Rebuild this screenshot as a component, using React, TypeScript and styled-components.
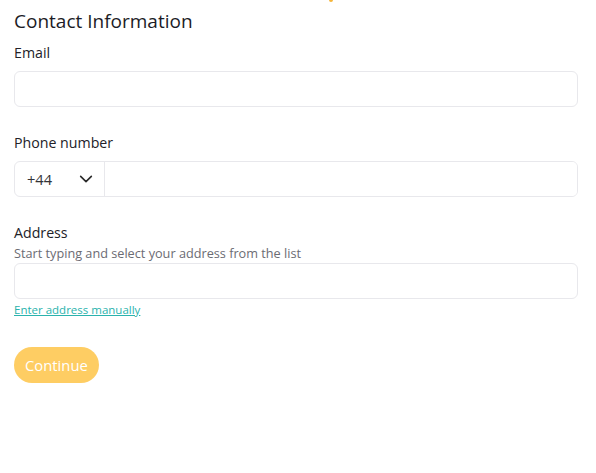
import styled, { createGlobalStyle } from 'styled-components';

const GlobalStyle = createGlobalStyle`
    * { box-sizing: border-box; }
    body {
        margin: 0;
        background: #ffffff;
        font-family: "Open Sans", "Noto Sans", sans-serif;
        color: #222228;
    }
`;

export default function App() {
    return (
        <>
            <GlobalStyle />
            <Page>
                <TopMark />
                <Title>Contact Information</Title>

                <Field>
                    <Label>Email</Label>
                    <Input type="email" />
                </Field>

                <Field>
                    <Label>Phone number</Label>
                    <PhoneRow>
                        <CountrySelect>
                            <span>+44</span>
                            <svg width="16" height="16" viewBox="0 0 24 24" fill="none" stroke="#2a2a2a" strokeWidth="2.4" strokeLinecap="round" strokeLinejoin="round">
                                <path d="M4 8l8 8 8-8" />
                            </svg>
                        </CountrySelect>
                        <PhoneInput type="tel" />
                    </PhoneRow>
                </Field>

                <Field>
                    <Label>Address</Label>
                    <Hint>Start typing and select your address from the list</Hint>
                    <Input type="text" />
                    <ManualLink href="#">Enter address manually</ManualLink>
                </Field>

                <ContinueButton>Continue</ContinueButton>
            </Page>
        </>
    );
}

const Page = styled.div`
    position: relative;
    display: flex;
    flex-direction: column;
    width: 564px;
    margin-left: 14px;
    padding-top: 8px;
`;

const TopMark = styled.div`
    position: absolute;
    top: 0;
    left: 315px;
    width: 4px;
    height: 2px;
    background: #f5b53a;
    border-radius: 0 0 2px 2px;
`;

const Title = styled.h1`
    margin: 0 0 8px;
    font-size: 19px;
    font-weight: 500;
    line-height: 27px;
    color: #1c1c26;
`;

const Field = styled.div`
    display: flex;
    flex-direction: column;
    margin-bottom: 26px;
`;

const Label = styled.label`
    font-size: 14.2px;
    line-height: 20px;
    margin-bottom: 8px;
    color: #222228;
`;

const Hint = styled.div`
    font-size: 12.7px;
    line-height: 16px;
    color: #6b6b73;
    margin-top: -6px;
    margin-bottom: 2px;
`;

const Input = styled.input`
    height: 36px;
    width: 100%;
    border: 1px solid #e8e8ec;
    border-radius: 6px;
    padding: 0 12px;
    font: inherit;
    outline: none;
    background: #fff;
`;

const PhoneRow = styled.div`
    display: flex;
    height: 36px;
    border: 1px solid #e8e8ec;
    border-radius: 6px;
    overflow: hidden;
`;

const CountrySelect = styled.div`
    display: flex;
    align-items: center;
    justify-content: space-between;
    width: 90px;
    padding: 0 10px 0 12px;
    border-right: 1px solid #e8e8ec;
    font-size: 14.6px;
    color: #333338;
`;

const PhoneInput = styled.input`
    flex: 1;
    border: none;
    outline: none;
    font: inherit;
    padding: 0 12px;
`;

const ManualLink = styled.a`
    margin-top: 3px;
    font-size: 11.5px;
    line-height: 15px;
    color: #2ab3ad;
    text-decoration: underline;
    align-self: flex-start;
`;

const ContinueButton = styled.button`
    align-self: flex-start;
    margin-top: 4px;
    height: 36px;
    padding: 0 11px;
    border: none;
    border-radius: 18px;
    background: #fecd63;
    color: #ffffff;
    font-family: inherit;
    font-size: 14.8px;
    cursor: pointer;
`;
